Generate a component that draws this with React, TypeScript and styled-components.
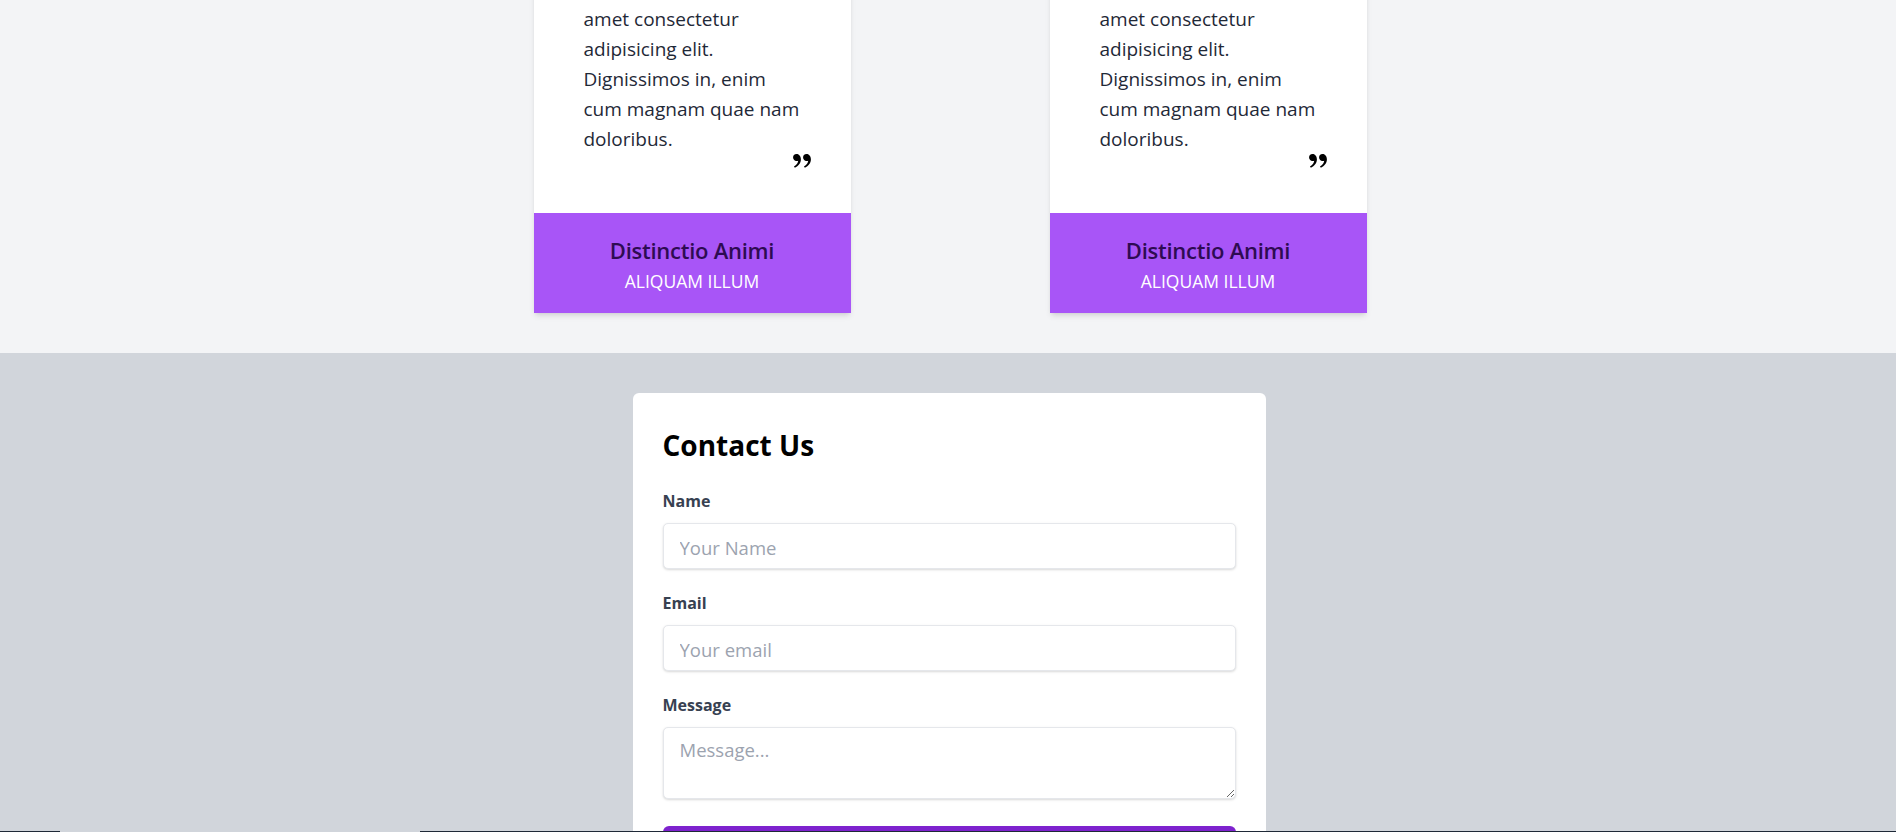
import React from "react";
import styled, { createGlobalStyle } from "styled-components";

const GlobalStyle = createGlobalStyle`
  html, body {
    margin: 0;
    padding: 0;
    background: #f3f4f6;
  }
  body {
    font-family: "Open Sans", "Noto Sans", sans-serif;
    color: #1f2937;
  }
  * { box-sizing: border-box; }
`;

const TopSection = styled.section`
  background: #f3f4f6;
  padding-bottom: 40px;
  overflow: hidden;
`;

const CardsRow = styled.div`
  display: flex;
  justify-content: center;
  gap: 199px;
  padding-left: 4px;
  margin-top: -66px;
`;

const TestimonialCard = styled.article`
  width: 317px;
  background: #ffffff;
  box-shadow: 0 4px 6px -1px rgba(0, 0, 0, 0.1), 0 2px 4px -2px rgba(0, 0, 0, 0.1);
  display: flex;
  flex-direction: column;
`;

const CardBody = styled.div`
  padding: 40px 40px 45px 50px;
  display: flex;
  flex-direction: column;
`;

const Quote = styled.p`
  margin: 0;
  font-size: 19px;
  line-height: 30px;
  color: #1f2937;
`;

const QuoteMark = styled.svg`
  display: block;
  align-self: flex-end;
  width: 18px;
  height: 14px;
  fill: #000;
`;

const CardFooter = styled.div`
  height: 100px;
  background: #a855f7;
  display: flex;
  flex-direction: column;
  align-items: center;
  padding-top: 22px;
`;

const PersonName = styled.h3`
  margin: 0;
  font-size: 22px;
  line-height: 30px;
  font-weight: 600;
  letter-spacing: -0.25px;
  color: #2e0b52;
`;

const PersonRole = styled.span`
  margin-top: 2px;
  font-size: 17.5px;
  line-height: 28px;
  text-transform: uppercase;
  color: #ffffff;
`;

const ContactSection = styled.section`
  background: #d1d5db;
  padding: 40px 0 60px 2px;
  display: flex;
  justify-content: center;
`;

const ContactCard = styled.form`
  width: 633px;
  background: #ffffff;
  border-radius: 6px;
  padding: 32px 30px;
  display: flex;
  flex-direction: column;
`;

const Title = styled.h2`
  margin: 0 0 24px;
  font-size: 28px;
  line-height: 40px;
  font-weight: 700;
  color: #000;
`;

const Field = styled.div`
  display: flex;
  flex-direction: column;
  margin-bottom: 22px;
`;

const Label = styled.label`
  font-size: 16px;
  line-height: 24px;
  font-weight: 700;
  color: #374151;
  margin-bottom: 10px;
`;

const fieldStyles = `
  width: 100%;
  border: 1px solid #e5e7eb;
  border-radius: 5px;
  box-shadow: 0 1px 3px rgba(0, 0, 0, 0.1), 0 1px 2px rgba(0, 0, 0, 0.06);
  font-family: "Open Sans", "Noto Sans", sans-serif;
  font-size: 18.5px;
  color: #1f2937;
  background: #fff;
  outline: none;
  &::placeholder { color: #9ca3af; }
`;

const Input = styled.input`
  ${fieldStyles}
  height: 46px;
  padding: 2px 16px 0;
`;

const TextArea = styled.textarea`
  ${fieldStyles}
  display: block;
  height: 72px;
  padding: 8px 16px;
  line-height: 28px;
`;

const SubmitButton = styled.button`
  margin-top: 5px;
  height: 48px;
  width: 100%;
  border: none;
  border-radius: 6px;
  background: #7e22ce;
  color: #fff;
  font-family: "Open Sans", "Noto Sans", sans-serif;
  font-size: 18px;
  font-weight: 600;
`;

const BottomEdge = styled.div`
  position: fixed;
  left: 0;
  right: 0;
  bottom: 0;
  height: 1px;
  background: linear-gradient(
    to right,
    #1f2937 0,
    #1f2937 60px,
    transparent 60px,
    transparent 420px,
    #1f2937 420px
  );
`;

const testimonials = [
  { name: "Distinctio Animi", role: "Aliquam illum" },
  { name: "Distinctio Animi", role: "Aliquam illum" },
];

function QuoteRightIcon() {
  return (
    <QuoteMark viewBox="3.1 5.4 18 14" aria-hidden="true">
      <path d="M19.417 6.679C20.447 7.773 21 9 21 10.989c0 3.5-2.457 6.637-6.030 8.188l-.893-1.378c3.335-1.804 3.987-4.145 4.247-5.621-.537.278-1.24.375-1.929.311-1.804-.167-3.226-1.648-3.226-3.489a3.5 3.5 0 0 1 3.5-3.5c1.073 0 2.099.49 2.748 1.179zm-10 0C10.447 7.773 11 9 11 10.989c0 3.5-2.457 6.637-6.03 8.188l-.893-1.378c3.335-1.804 3.987-4.145 4.247-5.621-.537.278-1.24.375-1.929.311C4.591 12.322 3.17 10.841 3.170 9a3.5 3.5 0 0 1 3.5-3.5c1.073 0 2.099.49 2.748 1.179z" />
    </QuoteMark>
  );
}

export default function App() {
  return (
    <>
      <GlobalStyle />
      <TopSection>
        <CardsRow>
          {testimonials.map((t, i) => (
            <TestimonialCard key={i}>
              <CardBody>
                <Quote>
                  Lorem ipsum dolor sit
                  <br />
                  amet consectetur
                  <br />
                  adipisicing elit.
                  <br />
                  Dignissimos in, enim
                  <br />
                  cum magnam quae nam
                  <br />
                  doloribus.
                </Quote>
                <QuoteRightIcon />
              </CardBody>
              <CardFooter>
                <PersonName>{t.name}</PersonName>
                <PersonRole>{t.role}</PersonRole>
              </CardFooter>
            </TestimonialCard>
          ))}
        </CardsRow>
      </TopSection>
      <ContactSection>
        <ContactCard onSubmit={(e) => e.preventDefault()}>
          <Title>Contact Us</Title>
          <Field>
            <Label htmlFor="name">Name</Label>
            <Input id="name" type="text" placeholder="Your Name" />
          </Field>
          <Field>
            <Label htmlFor="email">Email</Label>
            <Input id="email" type="email" placeholder="Your email" />
          </Field>
          <Field>
            <Label htmlFor="message">Message</Label>
            <TextArea id="message" placeholder="Message..." />
          </Field>
          <SubmitButton type="submit">Send Message</SubmitButton>
        </ContactCard>
      </ContactSection>
      <BottomEdge />
    </>
  );
}
